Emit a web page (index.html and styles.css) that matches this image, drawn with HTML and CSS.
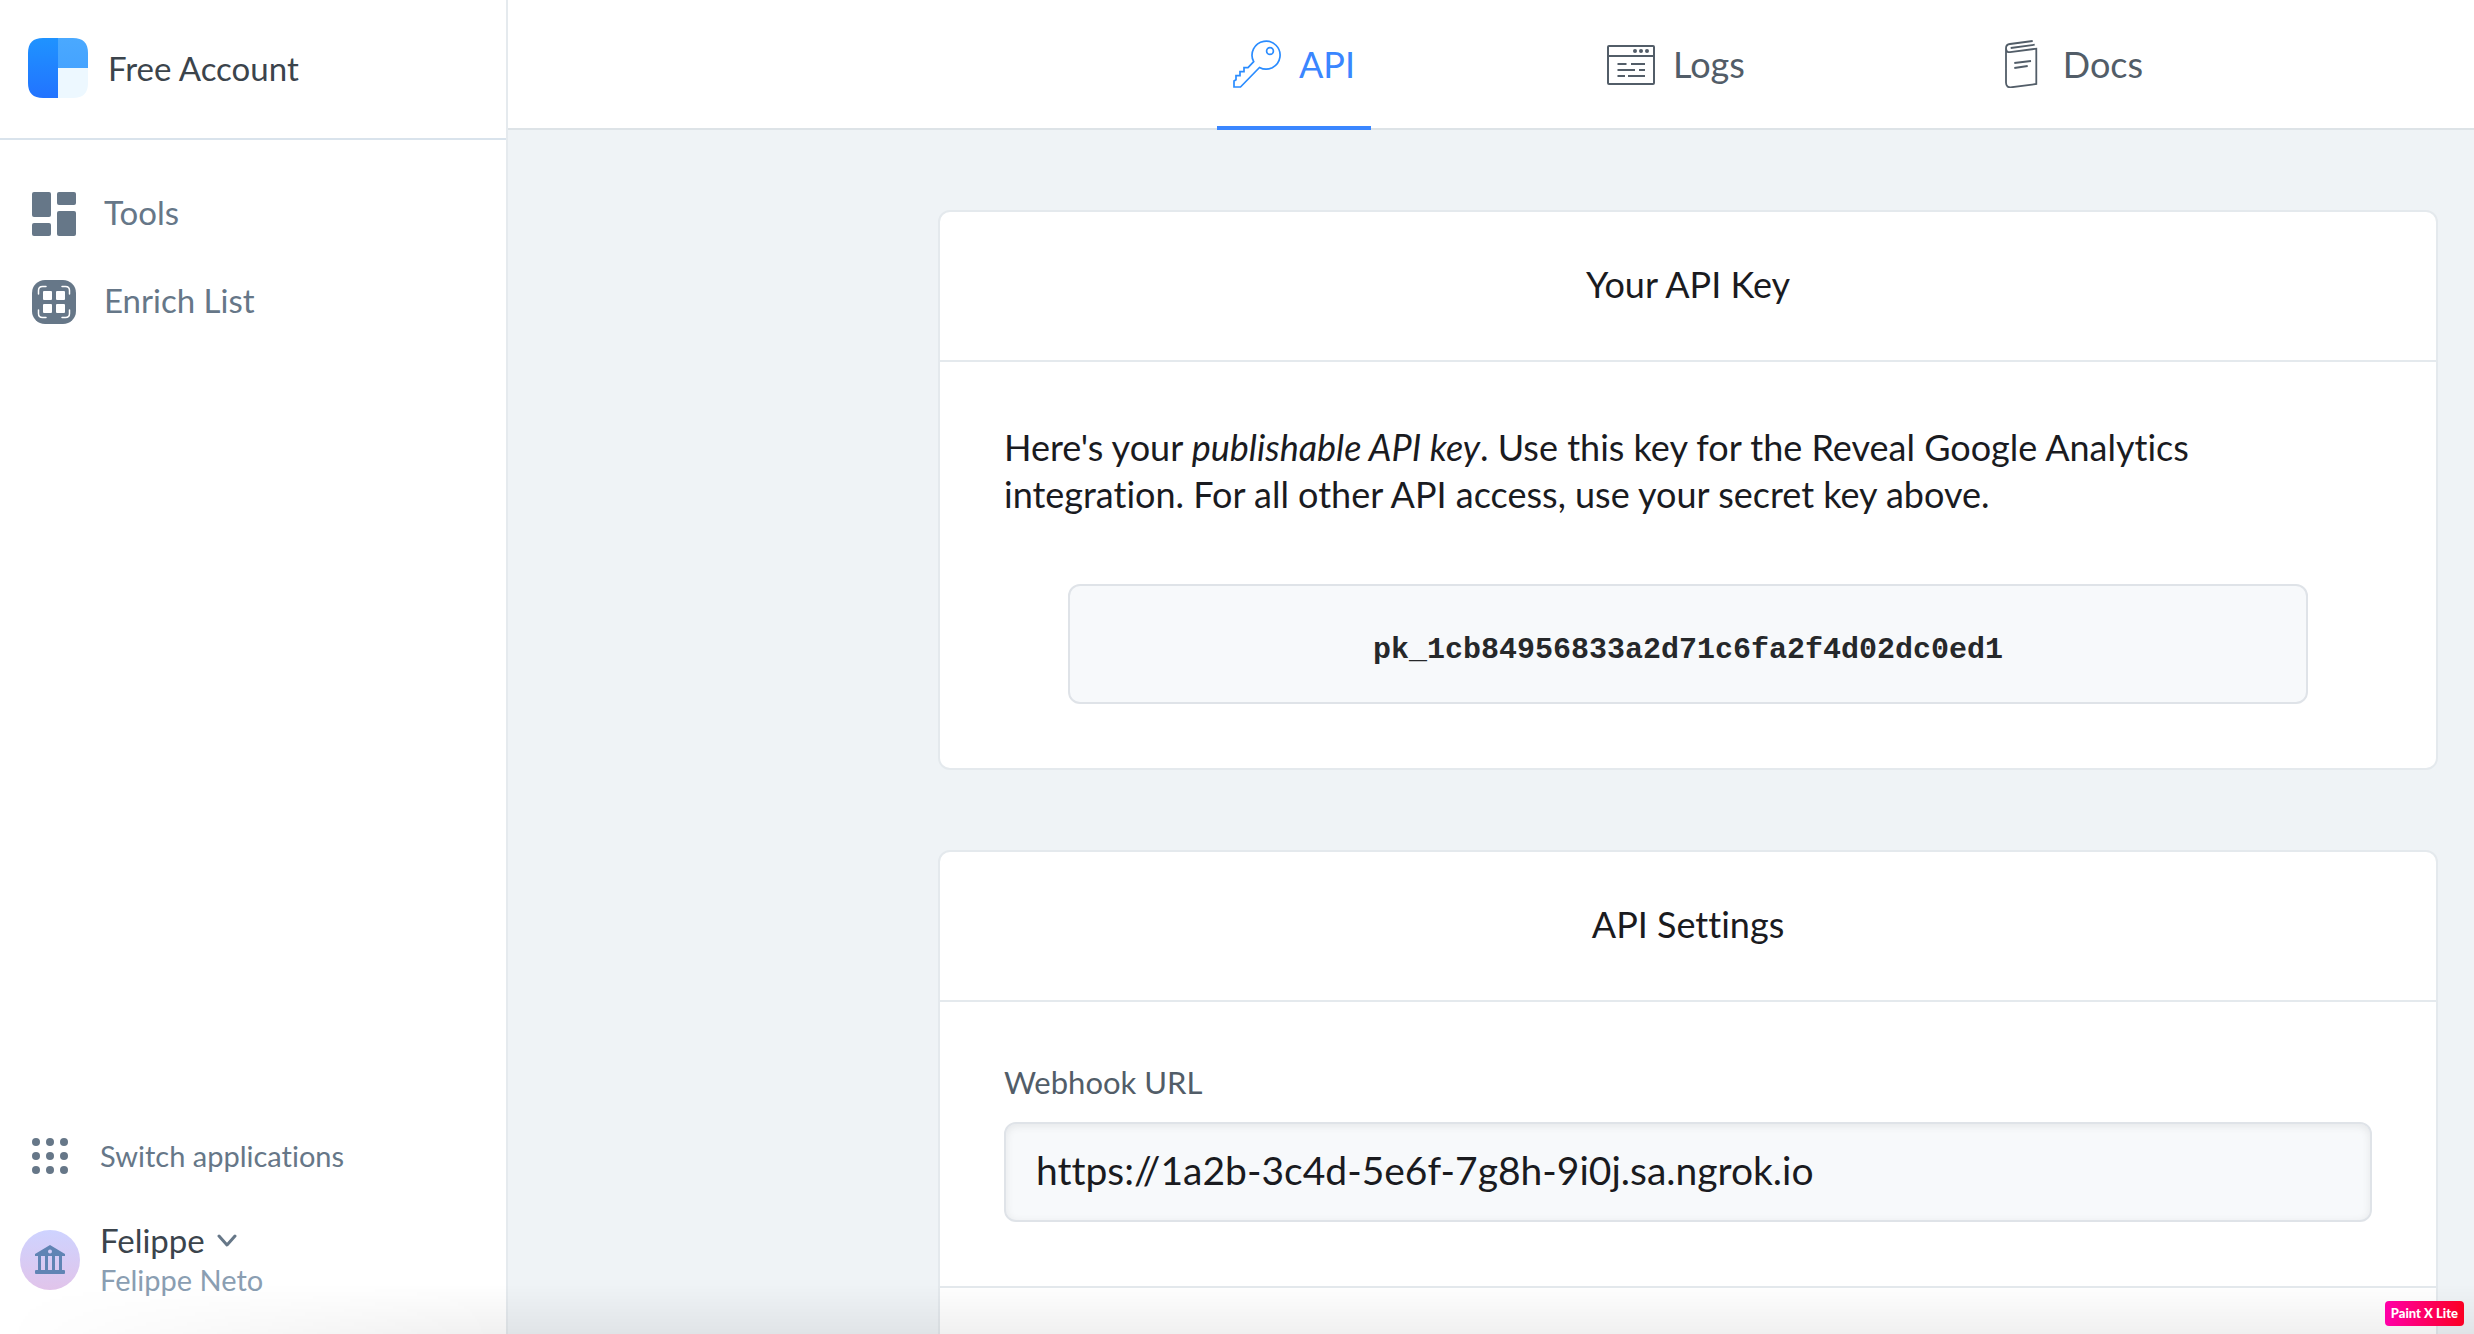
FILE: index.html
```html
<!DOCTYPE html>
<html lang="en">
<head>
<meta charset="utf-8">
<meta name="viewport" content="width=device-width, initial-scale=1">
<title>API</title>
<link rel="stylesheet" href="styles.css">
</head>
<body>
<div class="app">
  <aside class="sidebar">
    <a class="brand" href="#">
      <svg class="brand-logo" viewBox="0 0 60 60" aria-hidden="true">
        <defs>
          <linearGradient id="logo-left" x1="0" y1="0" x2="0" y2="1"><stop offset="0" stop-color="#1f93ff"/><stop offset="1" stop-color="#2273ff"/></linearGradient>
          <linearGradient id="logo-right" x1="0" y1="0" x2="0" y2="1"><stop offset="0" stop-color="#4aa9ff"/><stop offset="1" stop-color="#45a3ff"/></linearGradient>
        </defs>
        <path fill="url(#logo-left)" d="M30 0H15C5 0 0 5 0 15v30c0 10 5 15 15 15h15z"/>
        <path fill="url(#logo-right)" d="M30 0h15c10 0 15 5 15 15v15H30z"/>
        <path fill="#edf8ff" d="M30 30h30v15c0 10-5 15-15 15H30z"/>
      </svg>
      <span>Free Account</span>
    </a>
    <nav class="side-nav" aria-label="Main">
      <a class="side-link" href="#">
        <svg class="side-icon" viewBox="0 0 44 44" fill="#667788" aria-hidden="true">
          <rect width="19" height="25" rx="2"/><rect x="25" width="19" height="13" rx="2"/>
          <rect y="31" width="19" height="13" rx="2"/><rect x="25" y="19" width="19" height="25" rx="2"/>
        </svg>
        <span class="side-text">Tools</span>
      </a>
      <a class="side-link" href="#">
        <svg class="side-icon" viewBox="0 0 44 44" aria-hidden="true">
          <rect width="44" height="44" rx="13" fill="#667788"/>
          <g fill="#fff"><rect x="11" y="11" width="9" height="9" rx="1"/><rect x="24" y="11" width="9" height="9" rx="1"/><rect x="11" y="24" width="9" height="9" rx="1"/><rect x="24" y="24" width="9" height="9" rx="1"/></g>
          <path fill="none" stroke="#fff" stroke-width="1.500" stroke-linecap="round" d="M6.500 14v-3.500q0-4 4-4H14M30 6.500h3.500q4 0 4 4V14M37.500 30v3.500q0 4-4 4H30M14 37.500h-3.500q-4 0-4-4V30"/>
        </svg>
        <span class="side-text">Enrich List</span>
      </a>
    </nav>
    <div class="side-footer">
      <button class="switch" type="button">
        <svg class="switch-icon" viewBox="0 0 36 36" fill="#667788" aria-hidden="true">
          <circle cx="4" cy="4" r="4"/><circle cx="18" cy="4" r="4"/><circle cx="32" cy="4" r="4"/>
          <circle cx="4" cy="18" r="4"/><circle cx="18" cy="18" r="4"/><circle cx="32" cy="18" r="4"/>
          <circle cx="4" cy="32" r="4"/><circle cx="18" cy="32" r="4"/><circle cx="32" cy="32" r="4"/>
        </svg>
        <span>Switch applications</span>
      </button>
      <button class="user" type="button">
        <span class="avatar">
          <svg class="bank" viewBox="0 0 30 30" fill="#6084b4" aria-hidden="true">
            <path fill-rule="evenodd" d="M15 0L30 9v2H0V9zM15 4.500a2 2 0 100 4 2 2 0 000-4z"/>
            <path d="M3 11h3v14H3zM10 11h3v14h-3zM17 11h3v14h-3zM24 11h3v14h-3z"/>
            <rect y="25" width="30" height="4" rx="1"/>
          </svg>
        </span>
        <span class="user-text">
          <span class="user-name">Felippe
            <svg class="chevron" viewBox="0 0 20 13" aria-hidden="true"><path d="M2 2l8 9 8-9" fill="none" stroke="#667788" stroke-width="3" stroke-linecap="round" stroke-linejoin="round"/></svg>
          </span>
          <span class="user-full">Felippe Neto</span>
        </span>
      </button>
    </div>
  </aside>
  <div class="main">
    <nav class="tabs" aria-label="Sections">
      <a class="tab tab-active" href="#" aria-current="page">
        <svg class="tab-icon" viewBox="0 0 48 48" fill="none" stroke="#2a8cff" stroke-width="1.700" aria-hidden="true">
          <path d="M20.700 21.700L15 27.700H11v4H7v4H3v4L1 41v6h6.500L26.500 27.500A14 14 0 1020.700 21.700z"/><circle cx="37" cy="11" r="3.400"/>
        </svg>
        <span>API</span>
      </a>
      <a class="tab" href="#">
        <svg class="tab-icon" viewBox="0 0 48 48" fill="none" stroke="#525d68" stroke-width="2" aria-hidden="true">
          <rect x="1" y="6" width="46" height="38" rx="1"/><path d="M1 16h46M10.500 24h9M24 24h14M10.500 30H28M32 30h6M10.500 36H18M21 36h17"/>
          <g fill="#525d68" stroke="none"><circle cx="28" cy="11" r="2"/><circle cx="34" cy="11" r="2"/><circle cx="40" cy="11" r="2"/></g>
        </svg>
        <span>Logs</span>
      </a>
      <a class="tab" href="#">
        <svg class="tab-icon" viewBox="0 0 48 48" fill="none" stroke="#525d68" stroke-width="1.800" aria-hidden="true">
          <path d="M35.700 1L13 4Q9 4.500 9 8v34.500Q9 48 15 47.200L39.300 44V8.700L13 12.200Q9 12.500 9 8M13.700 8L37.700 4.700M17.300 23L34 21M17.300 28l13.400-2"/>
        </svg>
        <span>Docs</span>
      </a>
    </nav>
    <main class="content">
      <section class="card">
        <h2 class="card-title">Your API Key</h2>
        <div class="card-body">
          <p class="intro">Here's your <em>publishable API key</em>. Use this key for the Reveal Google Analytics integration. For all other API access, use your secret key above.</p>
          <code class="key">pk_1cb84956833a2d71c6fa2f4d02dc0ed1</code>
        </div>
      </section>
      <section class="card">
        <h2 class="card-title">API Settings</h2>
        <div class="card-body">
          <label class="label" for="webhook">Webhook URL</label>
          <input class="input" id="webhook" type="text" value="https://1a2b-3c4d-5e6f-7g8h-9i0j.sa.ngrok.io">
        </div>
        <div class="card-more"></div>
      </section>
    </main>
  </div>
</div>
<div class="fade"></div>
<div class="watermark">Paint X Lite</div>
</body>
</html>
```
FILE: styles.css
```css
* { box-sizing: border-box; }
body { margin: 0; background: #eff3f6; color: #1a1b1f; font-family: Lato, "Liberation Sans", sans-serif; font-variant-ligatures: none; }
a { color: inherit; text-decoration: none; }
button { padding: 0; border: 0; background: none; font: inherit; text-align: left; cursor: pointer; }
svg { display: block; flex: none; }
.app { display: flex; height: 100vh; overflow: hidden; }

.sidebar { display: flex; flex-direction: column; flex: none; width: 508px; background: #fff; border-right: 2px solid #e5eaee; color: #667788; }
.brand { display: flex; align-items: center; gap: 20px; height: 140px; padding: 0 28px 2px; border-bottom: 2px solid #d9e3ec; color: #3b444c; font-size: 33px; }
.brand-logo { width: 60px; height: 60px; }
.side-nav { display: flex; flex-direction: column; gap: 44px; padding: 52px 32px; }
.side-link { display: flex; align-items: center; gap: 28px; height: 44px; font-size: 33px; }
.side-text { padding-bottom: 4px; }
.side-icon { width: 44px; height: 44px; }
.side-footer { display: flex; flex-direction: column; gap: 44px; margin-top: auto; padding: 0 20px 34px; }
.switch { display: flex; align-items: center; gap: 32px; padding-left: 12px; color: #667788; font-size: 29px; line-height: 40px; }
.switch-icon { width: 36px; height: 36px; }
.user { display: flex; align-items: center; gap: 20px; }
.avatar { display: flex; align-items: center; justify-content: center; width: 60px; height: 60px; border-radius: 50%; background: linear-gradient(#ced3ff, #e1c4ea); }
.bank { width: 30px; height: 30px; }
.user-text { display: flex; flex-direction: column; line-height: 40px; }
.user-name { display: flex; align-items: center; gap: 12px; color: #3b444c; font-size: 33px; }
.user-full { color: #8a9eb2; font-size: 29px; }
.chevron { width: 20px; height: 13px; }

.main { flex: 1; min-width: 0; display: flex; flex-direction: column; }
.tabs { display: flex; flex: none; justify-content: center; gap: 220px; height: 130px; padding-left: 394px; background: #fff; border-bottom: 2px solid #dde3e7; color: #525d68; font-size: 36px; }
.tab { display: flex; align-items: center; gap: 18px; height: 130px; padding: 2px 16px 0; border-bottom: 4px solid transparent; }
.tab-active { color: #3a86ff; border-color: #3a86ff; }
.tab-icon { width: 48px; height: 48px; }

.content { display: flex; flex-direction: column; gap: 80px; padding: 80px 36px 0 430px; }
.card { flex: none; background: #fff; border: 2px solid #e4e9ed; border-radius: 12px; }
.card-title { margin: 0; padding: 46px 0 50px; border-bottom: 2px solid #e4e9ed; font-size: 36px; font-weight: 400; line-height: 52px; text-align: center; }
.card-body { padding: 62px 64px 64px; }
.intro { margin: 0; font-size: 36px; line-height: 47px; }
.key { display: block; margin: 66px 64px 0; padding: 44px 0 32px; border: 2px solid #dfe3e8; border-radius: 12px; background: #f7f9fb; color: #26282a; font: bold 30px/40px "Liberation Mono", monospace; text-align: center; }
.label { display: block; color: #525d68; font-size: 31px; line-height: 36px; }
.input { display: block; width: 100%; height: 100px; margin-top: 22px; padding: 0 30px 4px; border: 2px solid #dfe3e8; border-radius: 12px; background: #f7f9fb; box-shadow: inset 0 2px 8px rgba(0, 0, 0, .08); color: #1a1b1f; font: inherit; font-size: 39px; }
.card-more { height: 200px; border-top: 2px solid #e4e9ed; }

.fade { position: fixed; left: 0; right: 0; bottom: 0; height: 50px; background: linear-gradient(transparent, rgba(0, 0, 0, .06)); pointer-events: none; -webkit-mask-image: linear-gradient(90deg, transparent, #000 500px); mask-image: linear-gradient(90deg, transparent, #000 500px); }
.watermark { position: fixed; right: 10px; bottom: 8px; padding: 0 6px; border-radius: 4px; background: linear-gradient(90deg, #ff00a8, #fb0023); color: #fff; font-size: 13px; font-weight: 900; line-height: 25px; }
```
